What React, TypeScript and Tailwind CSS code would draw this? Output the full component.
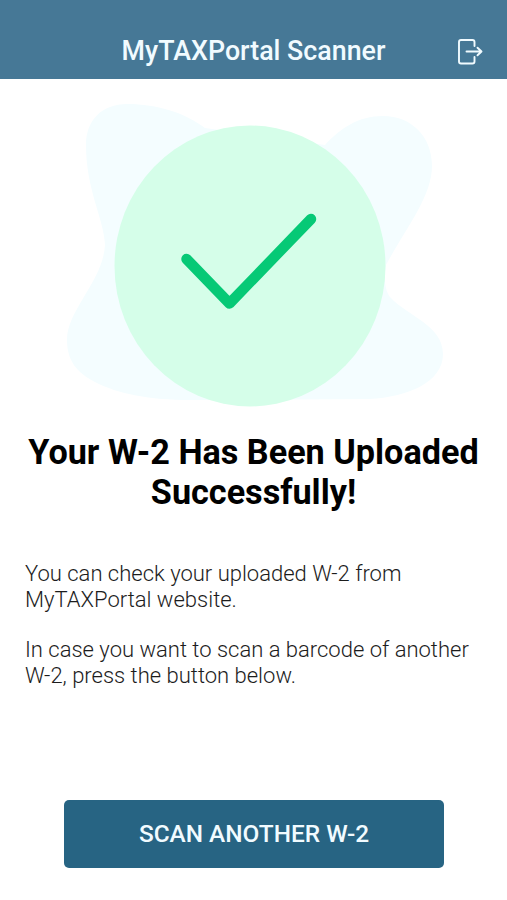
import React from 'react';

const LogoutIcon = () => (
  <svg className="h-[27px] w-[26px]" viewBox="0 0 26 27" fill="none" stroke="#f1fbff" strokeWidth="1.9" strokeLinecap="round" strokeLinejoin="round">
    <path d="M17.500 8V4a2 2 0 0 0-2-2H4a2 2 0 0 0-2 2v19.500a2 2 0 0 0 2 2h11.500a2 2 0 0 0 2-2V19" />
    <path d="M9.500 13.500H24M20.500 9.700l4 3.800-4 3.800" />
  </svg>
);

const SuccessArt = () => (
  <svg className="block h-[341px] w-full" viewBox="0 79 507 341" fill="none">
    {/* Fondo */}
    <path
      d="M86 145C86 120 102 104 127 104C158 104 185 113 205 128L325 145C341 128 358 116 383 116C411 116 432 136 432 166C432 197 404 231 386 265C384 276 384 289 390 297C407 316 443 325 443 354C443 383 406 397 370 399L190 400C150 400 118 394 95 382C78 373 67 362 67 340C67 310 103 281 105 245C104 219 86 190 86 145Z"
      fill="#f4fdff"
    />
    <ellipse cx="250" cy="266" rx="135.500" ry="140.500" fill="#d5fee9" />
    <path d="M186.500 259L229.500 303.500L311 219" stroke="#06c976" strokeWidth="10.500" strokeLinecap="round" strokeLinejoin="round" />
  </svg>
);

const App = () => {
  return (
    <div className="flex min-h-[900px] w-full flex-col bg-white font-[Roboto,sans-serif] text-black">
      <header className="grid h-[79px] grid-cols-[60px_1fr_60px] items-center bg-[#467896] pt-[21px]">
        <h1 className="col-start-2 mt-[2px] text-center text-[26.8px] leading-[30px] font-medium whitespace-nowrap text-[#f1fbff]">
          MyTAXPortal Scanner
        </h1>
        <button className="mt-[2px] ml-[10px] w-[26px]" aria-label="Log out">
          <LogoutIcon />
        </button>
      </header>

      <main className="flex flex-1 flex-col">
        <SuccessArt />

        <h2 className="mt-[12px] text-center text-[34.2px] leading-[40px] font-bold whitespace-nowrap">
          Your W-2 Has Been Uploaded
          <br />
          Successfully!
        </h2>

        <div className="mt-[49px] flex flex-col gap-[25px] px-[25px] text-[22px] leading-[25.500px] font-light whitespace-nowrap text-[#1c1c1c]">
          <p>
            You can check your uploaded W-2 from
            <br />
            MyTAXPortal website.
          </p>
          <p>
            In case you want to scan a barcode of another
            <br />
            W-2, press the button below.
          </p>
        </div>

        <button className="mt-auto mb-[32px] ml-[64px] h-[68px] w-[380px] rounded-[5px] bg-[#276483] pt-px text-[24.4px] font-medium text-[#f1fbff]">
          SCAN ANOTHER W-2
        </button>
      </main>
    </div>
  );
};

export default App;
